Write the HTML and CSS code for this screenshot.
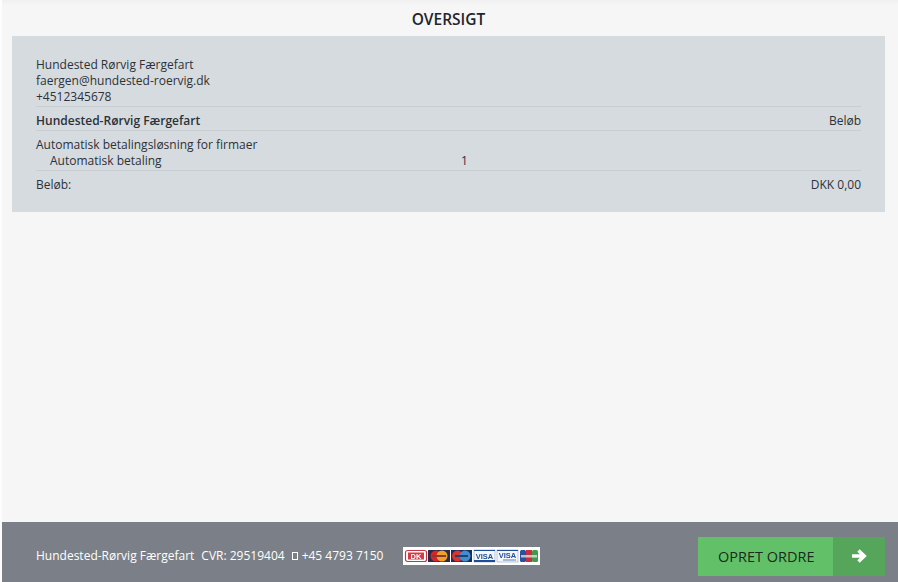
FILE: index.html
```html
<!DOCTYPE html>
<html lang="da">
<head>
<meta charset="utf-8">
<title>Oversigt</title>
<link rel="stylesheet" href="styles.css">
</head>
<body>
<div class="page">
  <main class="main">
    <h1 class="title">OVERSIGT</h1>
    <section class="card">
      <div class="contact">
        <div>Hundested Rørvig Færgefart</div>
        <div>faergen@hundested-roervig.dk</div>
        <div>+4512345678</div>
      </div>
      <div class="row head"><strong>Hundested-Rørvig Færgefart</strong><span>Beløb</span></div>
      <div class="items">
        <div>Automatisk betalingsløsning for firmaer</div>
        <div class="item"><span class="item-name">Automatisk betaling</span><span>1</span></div>
      </div>
      <div class="row total"><span>Beløb:</span><span>DKK 0,00</span></div>
    </section>
  </main>
  <footer class="footer">
    <div class="info">
      <span>Hundested-Rørvig Færgefart</span>
      <span>CVR: 29519404</span>
      <span class="phone"><i class="missing"></i>+45 4793 7150</span>
    </div>
    <div class="cards">
      <svg class="card-logos" width="137" height="18" viewBox="0 0 137 18" xmlns="http://www.w3.org/2000/svg">
        <rect width="137" height="18" fill="#fff"/>
        <rect x="2.500" y="3.500" width="21" height="11" rx="2" fill="#fff" stroke="#c8333f" stroke-width="1.200"/>
        <rect x="5" y="5.500" width="16" height="7" fill="#d23a47"/>
        <text x="13" y="12" text-anchor="middle" class="dk">DK</text>
        <rect x="25" y="3" width="22" height="12" fill="#2a2a4a"/>
        <circle cx="33" cy="9" r="5.500" fill="#d8232a"/>
        <circle cx="39" cy="9" r="5.500" fill="#eba12a"/>
        <rect x="29" y="8" width="14" height="2" fill="#8a3a30"/>
        <rect x="48" y="3" width="21" height="12" fill="#1f2a5c"/>
        <circle cx="54.500" cy="9" r="5.500" fill="#d8342f"/>
        <circle cx="62" cy="9" r="5.500" fill="#3d8fd1"/>
        <rect x="52" y="8" width="13" height="2" fill="#24406f"/>
        <rect x="71" y="3" width="21" height="12" fill="#f4f6fa" stroke="#8fa3c4" stroke-width=".6"/>
        <rect x="71" y="13" width="21" height="2" fill="#1f4e96"/>
        <rect x="71" y="3" width="21" height="1" fill="#1f4e96"/>
        <text x="81.500" y="11.500" text-anchor="middle" class="visa">VISA</text>
        <rect x="94" y="3" width="21" height="12" fill="#f4f6fa" stroke="#8fa3c4" stroke-width=".6"/>
        <rect x="94" y="3" width="21" height="1" fill="#1f4e96"/>
        <text x="104.500" y="10.500" text-anchor="middle" class="visa">VISA</text>
        <rect x="100" y="12" width="13" height="2" fill="#a9bbd6"/>
        <rect x="117" y="3" width="6" height="12" rx="1.500" fill="#2a4f9c"/>
        <rect x="123" y="3" width="6" height="12" fill="#c6303e"/>
        <rect x="129" y="3" width="6" height="12" rx="1.500" fill="#3f9a4a"/>
        <rect x="118" y="8" width="16" height="2.500" fill="#e4e8ea" opacity=".75"/>
      </svg>
    </div>
    <button class="order" type="button">
      <span class="order-label">OPRET ORDRE</span>
      <span class="order-icon">
        <svg width="16" height="14" viewBox="0 0 16 14" xmlns="http://www.w3.org/2000/svg"><path d="M1 7h12M7.500 1.500 13.300 7 7.500 12.500" fill="none" stroke="#fff" stroke-width="3.400"/></svg>
      </span>
    </button>
  </footer>
</div>
</body>
</html>
```

FILE: styles.css
```css
html, body {
  margin: 0;
  height: 100%;
}
body {
  background: #fdfdfd;
  font-family: "Open Sans", sans-serif;
  font-size: 12px;
  line-height: 16px;
  color: #2b323a;
  overflow: hidden;
}
.page {
  margin-left: 2px;
  height: 582px;
  display: flex;
  flex-direction: column;
  background: linear-gradient(#f0f0f0, #f6f6f6 5px);
}
.main {
  flex: 1;
  padding: 0 13px 0 10px;
}
.title {
  margin: 0;
  height: 36px;
  line-height: 39px;
  text-align: center;
  font-size: 15.500px;
  font-weight: 600;
  color: #1f262c;
}
.card {
  background: #d6dbdf;
  height: 176px;
  box-sizing: border-box;
  padding: 21px 24px 0;
}
.contact {
  padding-bottom: 1px;
}
.row {
  display: flex;
  justify-content: space-between;
  border-top: 1px solid #c9ced3;
  padding: 6px 0 1px;
}
.row strong {
  font-weight: 600;
}
.head {
  height: 16px;
}
.items {
  border-top: 1px solid #c9ced3;
  padding: 6px 0 1px;
}
.item {
  display: flex;
  padding-left: 14px;
}
.item-name {
  width: 411px;
}
.footer {
  height: 60px;
  box-sizing: border-box;
  padding: 8px 13px 0 34px;
  background: #7b7f87;
  display: flex;
  align-items: center;
  color: #fff;
}
.info {
  display: flex;
  gap: 7px;
  width: 367px;
}
.phone {
  display: flex;
  align-items: center;
}
.missing {
  width: 6px;
  height: 8px;
  border: 1px solid #fff;
  box-sizing: border-box;
  margin-right: 4px;
}
.cards {
  display: flex;
  flex: 1;
}
.card-logos {
  filter: blur(0.4px);
}
.dk {
  font-family: "Liberation Sans", sans-serif;
  font-size: 7.500px;
  font-weight: 700;
  fill: #fff;
}
.visa {
  font-family: "Liberation Sans", sans-serif;
  font-size: 7.500px;
  font-weight: 700;
  fill: #1f4e96;
}
.order {
  display: flex;
  width: 187px;
  height: 39px;
  padding: 0;
  border: 0;
  background: #62c168;
  font-family: "Open Sans", sans-serif;
}
.order-label {
  flex: 1;
  line-height: 39px;
  text-align: left;
  padding-left: 20px;
  font-size: 14.500px;
  color: #1b2a1d;
}
.order-icon {
  width: 52px;
  height: 39px;
  background: #55a65a;
  display: flex;
  align-items: center;
  justify-content: center;
}
```
